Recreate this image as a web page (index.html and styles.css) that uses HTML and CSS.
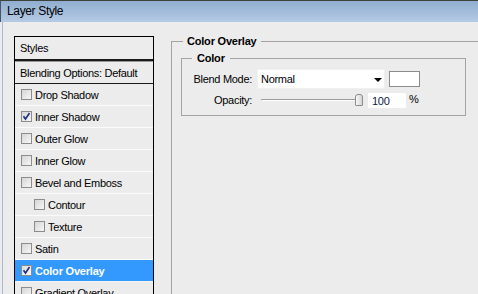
FILE: index.html
```html
<!DOCTYPE html>
<html>
<head>
<meta charset="utf-8">
<link rel="stylesheet" href="styles.css">
</head>
<body>
<div class="window">
  <div class="titlebar">Layer Style</div>
  <div class="content">
    <div class="styles-list">
      <div class="list-header">Styles</div>
      <div class="list-row blending">Blending Options: Default</div>
      <div class="list-row"><span class="cb"></span>Drop Shadow</div>
      <div class="list-row"><span class="cb checked"><svg viewBox="0 0 11 11" width="11" height="11"><path d="M2.5 5.2 L4.5 8 L8.5 2" fill="none" stroke="#1f2f80" stroke-width="1.6"/></svg></span>Inner Shadow</div>
      <div class="list-row"><span class="cb"></span>Outer Glow</div>
      <div class="list-row"><span class="cb"></span>Inner Glow</div>
      <div class="list-row"><span class="cb"></span>Bevel and Emboss</div>
      <div class="list-row sub"><span class="cb"></span>Contour</div>
      <div class="list-row sub"><span class="cb"></span>Texture</div>
      <div class="list-row"><span class="cb"></span>Satin</div>
      <div class="list-row selected"><span class="cb checked"><svg viewBox="0 0 11 11" width="11" height="11"><path d="M2.5 5.2 L4.5 8 L8.5 2" fill="none" stroke="#1f2f80" stroke-width="1.6"/></svg></span>Color Overlay</div>
      <div class="list-row"><span class="cb"></span>Gradient Overlay</div>
    </div>
    <fieldset class="group outer">
      <legend>Color Overlay</legend>
      <fieldset class="group inner">
        <legend>Color</legend>
        <div class="form-row first">
          <span class="lbl">Blend Mode:</span>
          <div class="select">Normal<span class="arrow"></span></div>
          <div class="swatch"></div>
        </div>
        <div class="form-row second">
          <span class="lbl">Opacity:</span>
          <div class="slider"><div class="track"></div><div class="thumb"></div></div>
          <div class="num">100</div>
          <span class="pct">%</span>
        </div>
      </fieldset>
    </fieldset>
  </div>
</div>
</body>
</html>
```

FILE: styles.css
```css
html, body {
  margin: 0;
  padding: 0;
  width: 478px;
  height: 294px;
  overflow: hidden;
  background: #ececec;
}

.window {
  font-family: "Liberation Sans", Arial, sans-serif;
  font-size: 11px;
  letter-spacing: -0.3px;
  color: #000;
  height: 294px;
  background: #ececec;
}

.titlebar {
  height: 21px;
  border-top: 1px solid #3c4139;
  border-left: 1px solid #4a5560;
  background: linear-gradient(#90aed0, #b5cae5);
  font-size: 12px;
  letter-spacing: -0.35px;
  line-height: 21px;
  padding-left: 6px;
  box-sizing: content-box;
}

.content {
  display: flex;
  align-items: flex-start;
  padding: 14px 0 0 11px;
  margin-left: 2px;
  border-left: 1px solid #a9bad6;
  height: 300px;
}

.styles-list {
  width: 138px;
  border: 1px solid #000;
  border-bottom: none;
  flex: none;
}

.list-header {
  height: 22px;
  line-height: 22px;
  padding-left: 5px;
  border-bottom: 2px solid #1a1a1a;
  box-shadow: 0 1px 0 #9a9a9a;
  margin-bottom: 1px;
}

.list-row {
  height: 21px;
  display: flex;
  align-items: center;
  padding-left: 6px;
  border-bottom: 1px solid #fbfbfb;
}

.list-row.blending {
  padding-left: 5px;
  border-bottom: 1px solid #1a1a1a;
}

.list-row.sub {
  padding-left: 19px;
}

.list-row.selected {
  background: #3399ff;
  color: #fff;
  font-weight: bold;
  letter-spacing: -0.2px;
  border-bottom-color: #f4f4f4;
}

.cb {
  width: 9px;
  height: 9px;
  border: 1px solid #8a8c8e;
  background: linear-gradient(135deg, #d6d6d6, #f6f6f6);
  margin-right: 3px;
  flex: none;
  position: relative;
  display: block;
}

.cb svg {
  display: block;
  margin: -1px 0 0 -1px;
}

.list-row.selected .cb {
  background: linear-gradient(135deg, #dcdcdc, #fafafa);
}

.group {
  margin: 0;
  border: 1px solid #a3a3a3;
  min-width: 0;
}

.group > legend {
  font-weight: bold;
  line-height: 14px;
  letter-spacing: -0.2px;
}

.outer {
  margin-left: 17px;
  margin-top: -2px;
  width: 320px;
  height: 300px;
  padding: 3px 0 0 9px;
  border-right: none;
}

.outer > legend {
  margin-left: 2px;
  padding: 0 4px;
}

.inner {
  width: 283px;
  padding: 4px 0 7px 0;
}

.inner > legend {
  margin-left: 10px;
  padding: 0 5px;
}

.form-row {
  display: flex;
  align-items: center;
}

.form-row.first {
  height: 20px;
}

.form-row.second {
  height: 16px;
  margin-top: 3px;
}

.lbl {
  width: 70px;
  text-align: right;
  flex: none;
}

.select {
  margin-left: 5px;
  width: 124px;
  height: 20px;
  background: #fff;
  box-shadow: inset 0 0 0 1px #f0f0f0;
  padding-left: 4px;
  line-height: 21px;
  display: flex;
  align-items: center;
  justify-content: space-between;
}

.arrow {
  width: 0;
  height: 0;
  border-left: 4px solid transparent;
  border-right: 4px solid transparent;
  border-top: 4px solid #000;
  margin-right: 3px;
  margin-top: 1px;
}

.swatch {
  margin-left: 4px;
  width: 29px;
  height: 14px;
  background: #fff;
  border: 1px solid #8c8c8c;
}

.slider {
  margin-left: 9px;
  width: 102px;
  height: 16px;
  display: flex;
  align-items: center;
}

.track {
  width: 94px;
  height: 1px;
  background: #9a9a9a;
  border-bottom: 1px solid #fff;
  border-left: 1px solid #b0b0b0;
}

.thumb {
  width: 6px;
  height: 10px;
  border: 1px solid #8c8c8c;
  border-radius: 3px 3px 1px 1px;
  background: linear-gradient(90deg, #f8f8f8, #d4d4d4);
  margin-top: -1px;
}

.num {
  margin-left: 5px;
  width: 34px;
  height: 15px;
  background: #fff;
  padding-left: 4px;
  line-height: 16px;
  color: #0d1a4a;
}

.pct {
  margin-left: 3px;
  margin-top: -3px;
}
```
